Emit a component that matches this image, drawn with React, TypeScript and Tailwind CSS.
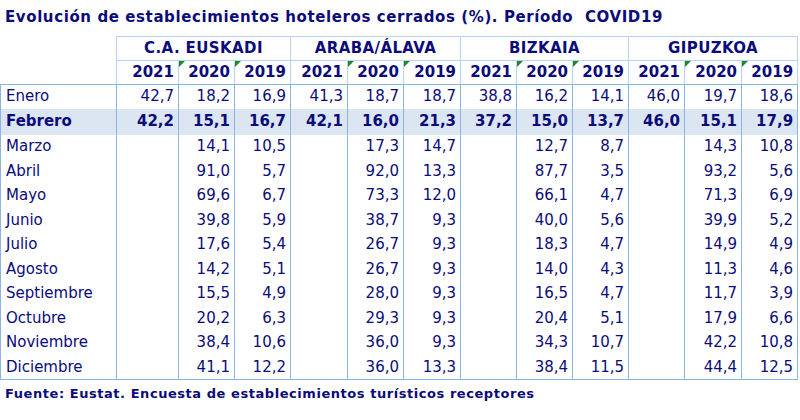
const REGIONS = ['C.A. EUSKADI', 'ARABA/ÁLAVA', 'BIZKAIA', 'GIPUZKOA']

// month, then 4 regions x [2021, 2020, 2019]
const ROWS: [string, string[]][] = [
  ['Enero', ['42,7', '18,2', '16,9', '41,3', '18,7', '18,7', '38,8', '16,2', '14,1', '46,0', '19,7', '18,6']],
  ['Febrero', ['42,2', '15,1', '16,7', '42,1', '16,0', '21,3', '37,2', '15,0', '13,7', '46,0', '15,1', '17,9']],
  ['Marzo', ['', '14,1', '10,5', '', '17,3', '14,7', '', '12,7', '8,7', '', '14,3', '10,8']],
  ['Abril', ['', '91,0', '5,7', '', '92,0', '13,3', '', '87,7', '3,5', '', '93,2', '5,6']],
  ['Mayo', ['', '69,6', '6,7', '', '73,3', '12,0', '', '66,1', '4,7', '', '71,3', '6,9']],
  ['Junio', ['', '39,8', '5,9', '', '38,7', '9,3', '', '40,0', '5,6', '', '39,9', '5,2']],
  ['Julio', ['', '17,6', '5,4', '', '26,7', '9,3', '', '18,3', '4,7', '', '14,9', '4,9']],
  ['Agosto', ['', '14,2', '5,1', '', '26,7', '9,3', '', '14,0', '4,3', '', '11,3', '4,6']],
  ['Septiembre', ['', '15,5', '4,9', '', '28,0', '9,3', '', '16,5', '4,7', '', '11,7', '3,9']],
  ['Octubre', ['', '20,2', '6,3', '', '29,3', '9,3', '', '20,4', '5,1', '', '17,9', '6,6']],
  ['Noviembre', ['', '38,4', '10,6', '', '36,0', '9,3', '', '34,3', '10,7', '', '42,2', '10,8']],
  ['Diciembre', ['', '41,1', '12,2', '', '36,0', '13,3', '', '38,4', '11,5', '', '44,4', '12,5']],
]

const COL_W = [116, 62, 56, 56, 57, 56, 57, 56, 56, 56, 56, 57, 56]
const YEARS = ['2021', '2020', '2019']

function Flag() {
  return (
    <span className="absolute left-0 top-0 w-0 h-0 border-t-[6px] border-t-[#1f8a2c] border-r-[6px] border-r-transparent" />
  )
}

function rowHeight(month: string) {
  if (month === 'Enero') return 'h-[24px]'
  if (month === 'Febrero') return 'h-[26px] bg-[#dce6f2] font-bold'
  return 'h-[24.5px]'
}

export default function App() {
  return (
    <div className="w-[800px] h-[420px] bg-white text-[#0b0b7a] font-['DejaVu_Sans',Verdana,sans-serif] overflow-hidden">
      <h1 className="h-[36px] pl-[5px] pt-[7px] text-[15px] font-bold leading-[20px] tracking-[0.6px] whitespace-nowrap">
        Evolución de establecimientos hoteleros cerrados (%). Período&nbsp; COVID19
      </h1>

      <table className="border-collapse table-fixed w-[797px] text-[15px] leading-none">
        <colgroup>
          {COL_W.map((w, i) => (
            <col key={i} style={{ width: w }} />
          ))}
        </colgroup>
        <thead className="font-bold">
          <tr className="h-[24px]">
            <th />
            {REGIONS.map((r) => (
              <th key={r} colSpan={3} className="border border-[#b9d3ee] text-center font-bold tracking-[0.4px]">
                {r}
              </th>
            ))}
          </tr>
          <tr className="h-[24px]">
            <th className="border-b border-b-[#8db3e2]" />
            {REGIONS.map((r) =>
              YEARS.map((y, j) => (
                <th
                  key={r + y}
                  className="relative border border-[#b9d3ee] border-b-[#8db3e2] text-right pr-[4px] font-bold"
                >
                  {j > 0 && <Flag />}
                  {y}
                </th>
              ))
            )}
          </tr>
        </thead>
        <tbody>
          {ROWS.map(([month, vals]) => (
            <tr key={month} className={rowHeight(month)}>
              <td className="border-x border-[#8db3e2] pl-[5px] text-left">{month}</td>
              {vals.map((v, i) => (
                <td key={i} className="border-x border-[#8db3e2] text-right pr-[4px]">
                  {v}
                </td>
              ))}
            </tr>
          ))}
          <tr className="h-0">
            <td colSpan={13} className="border-t border-[#8db3e2] p-0" />
          </tr>
        </tbody>
      </table>

      <p className="pl-[5px] pt-[6px] text-[13px] font-bold leading-[16px] tracking-[0.55px] whitespace-nowrap">
        Fuente: Eustat. Encuesta de establecimientos turísticos receptores
      </p>
    </div>
  )
}
